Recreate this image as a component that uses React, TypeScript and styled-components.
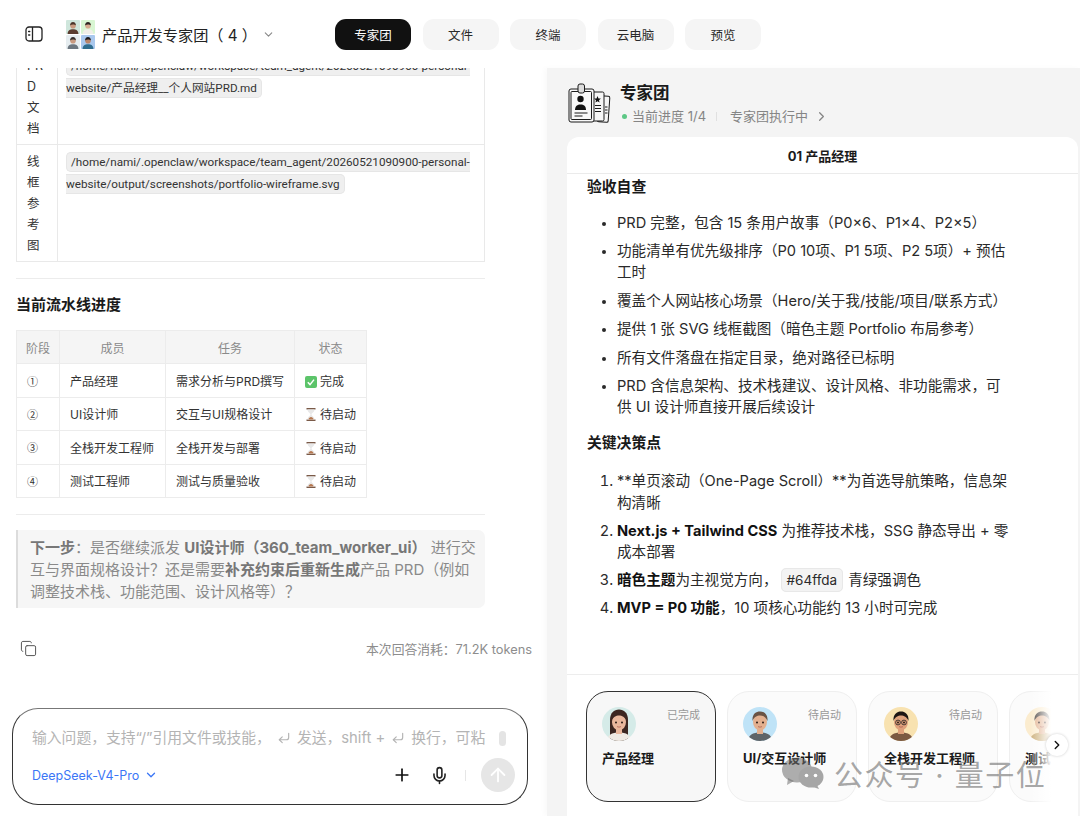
import React from 'react';
import styled, { createGlobalStyle } from 'styled-components';
import { ChevronDown, ChevronRight, Plus, Mic, ArrowUp, Copy, CornerDownLeft } from 'lucide-react';

const FONT = `Inter, "Noto Sans CJK SC", "Noto Sans", sans-serif`;

const GlobalStyle = createGlobalStyle`
  html, body {
    margin: 0;
    padding: 0;
    background: #fff;
    font-family: ${FONT};
    color: #1c1c1c;
  }
  * { box-sizing: border-box; }
`;

const Page = styled.div`
  position: relative;
  width: 1080px;
  height: 816px;
  overflow: hidden;
  display: flex;
  flex-direction: column;
`;

const Header = styled.header`
  height: 68px;
  flex: none;
  display: flex;
  align-items: center;
  padding-left: 25px;
`;

const TitleGroup = styled.div`
  display: flex;
  align-items: center;
  margin-left: 23px;
  width: 269px;
`;

const TeamTitle = styled.div`
  font-size: 15.2px;
  color: #222;
  margin-left: 7px;
  white-space: nowrap;
`;

const AvatarGrid = styled.div`
  display: grid;
  grid-template-columns: 14px 14px;
  grid-auto-rows: 14px;
  gap: 1px;
`;

const Tabs = styled.nav`
  display: flex;
  gap: 11.5px;
`;

const Tab = styled.div<{ $active?: boolean }>`
  width: 76px;
  height: 31px;
  border-radius: 11px;
  display: flex;
  align-items: center;
  justify-content: center;
  font-size: 12.5px;
  background: ${p => (p.$active ? '#111' : '#f5f5f5')};
  color: ${p => (p.$active ? '#fff' : '#2a2a2a')};
`;

const Body = styled.div`
  flex: 1;
  min-height: 0;
  display: flex;
`;

const LeftColumn = styled.section`
  width: 547px;
  flex: none;
  display: flex;
  flex-direction: column;
  min-height: 0;
`;

const ChatScroll = styled.div`
  height: 562px;
  flex: none;
  overflow: hidden;
  padding: 0 62px 0 16px;
`;

const ChatContent = styled.div`
  margin-top: -20px;
`;

const InfoTable = styled.table`
  width: 100%;
  border-collapse: collapse;
  font-size: 12.5px;
  border: 1px solid #e9e9e9;
  color: #333;
  td {
    border: 1px solid #e9e9e9;
    vertical-align: top;
  }
`;

const NarrowCell = styled.td`
  width: 41px;
  padding: 6px 0 0 10px;
  line-height: 21px;
  font-size: 12.5px;
`;

const PathCell = styled.td<{ $first?: boolean }>`
  padding: 6px 10px 0 8px;
  line-height: 22px;
  height: ${p => (p.$first ? '96px' : '117px')};
`;

const PathChip = styled.code`
  font-family: Roboto, "Noto Sans CJK SC", sans-serif;
  font-size: 11.7px;
  color: #333;
  background: #efefef;
  border: 1px solid #e6e6e6;
  border-radius: 5px;
  padding: 2px 4px;
  box-decoration-break: slice;
`;

const Rule = styled.hr`
  border: 0;
  border-top: 1px solid #ececec;
  margin: 16px 0 0;
`;

const SectionHeading = styled.h3`
  font-size: 15px;
  line-height: 20px;
  font-weight: 700;
  color: #1a1a1a;
  margin: 16px 0 15px;
`;

const ProgressTable = styled.table`
  border-collapse: collapse;
  font-size: 12px;
  color: #333;
  th, td {
    border: 1px solid #ececec;
    height: 33.4px;
    padding: 0 0 0 10px;
    text-align: left;
    font-weight: 400;
    white-space: nowrap;
  }
  th {
    background: #f5f5f5;
    color: #8a8a8a;
    text-align: center;
    padding: 0;
  }
`;

const StageMark = styled.span`
  font-family: "Noto Sans CJK SC", sans-serif;
  font-size: 11px;
`;

const Callout = styled.blockquote`
  margin: 15px 0 0;
  padding: 7px 8px 7px 12px;
  background: #f6f6f6;
  border-left: 2px solid #dcdcdc;
  border-radius: 0 7px 7px 0;
  font-size: 15px;
  line-height: 22px;
  color: #8a8a8a;
  height: 78px;
  b { font-weight: 700; color: #777; }
`;

const MetaRow = styled.div`
  display: flex;
  align-items: center;
  justify-content: space-between;
  padding: 0 15px 0 20px;
  height: 30px;
  margin-top: 3px;
`;

const TokenNote = styled.span`
  font-size: 12.8px;
  color: #8d8d8d;
`;

const Composer = styled.div`
  margin: 45px 0 0 12px;
  width: 516px;
  height: 97px;
  border: 1px solid #333;
  border-top-color: #777;
  border-radius: 26px;
  padding: 19px 12px 0 19px;
  background: #fff;
`;

const Prompt = styled.div`
  display: flex;
  align-items: center;
  gap: 6px;
  font-size: 14.8px;
  line-height: 20px;
  color: #b4b4b4;
  white-space: nowrap;
`;

const ScrollThumb = styled.span`
  width: 7px;
  height: 15px;
  margin-left: 8px;
  border-radius: 4px;
  background: #e4e4e4;
`;

const ComposerBar = styled.div`
  display: flex;
  align-items: center;
  margin-top: 10px;
`;

const ModelPicker = styled.div`
  display: flex;
  align-items: center;
  gap: 5px;
  font-size: 12.5px;
  color: #3b76f6;
`;

const ComposerActions = styled.div`
  margin-left: auto;
  display: flex;
  align-items: center;
`;

const Divider = styled.span`
  width: 1px;
  height: 11px;
  background: #e6e6e6;
  margin: 0 15px 0 16px;
`;

const SendButton = styled.div`
  width: 34px;
  height: 34px;
  border-radius: 50%;
  background: #e6e6e6;
  display: flex;
  align-items: center;
  justify-content: center;
  color: #fff;
`;

const Panel = styled.section`
  flex: 1;
  min-width: 0;
  background: #f4f4f4;
  box-shadow: -3px 0 5px rgba(0, 0, 0, 0.025);
  padding-left: 20px;
  display: flex;
  flex-direction: column;
`;

const PanelHeader = styled.div`
  height: 69px;
  flex: none;
  padding-top: 2px;
  display: flex;
  align-items: center;
  gap: 9px;
`;

const PanelTitle = styled.div`
  font-size: 16.5px;
  line-height: 20px;
  font-weight: 700;
  color: #1a1a1a;
`;

const PanelStatus = styled.div`
  display: flex;
  align-items: center;
  font-size: 13px;
  line-height: 16px;
  color: #858585;
  margin-top: 5px;
`;

const GreenDot = styled.span`
  width: 5px;
  height: 5px;
  border-radius: 50%;
  background: #5cc785;
  margin: 0 5px 0 2px;
`;

const StatusSep = styled.span`
  width: 1px;
  height: 9px;
  background: #e0e0e0;
  margin: 0 13px 0 10px;
`;

const Sheet = styled.div`
  flex: 1;
  min-height: 0;
  background: #fff;
  border-radius: 12px 12px 0 0;
  margin-right: 2px;
  display: flex;
  flex-direction: column;
`;

const SheetTitle = styled.div`
  height: 37px;
  flex: none;
  display: flex;
  align-items: center;
  justify-content: center;
  font-size: 13px;
  font-weight: 700;
  color: #1a1a1a;
  border-bottom: 1px solid #ebebeb;
`;

const Report = styled.div`
  height: 501px;
  flex: none;
  overflow: hidden;
  padding: 0 63px 0 20px;
  border-bottom: 1px solid #ededed;
  font-size: 14.6px;
  line-height: 21px;
  color: #2a2a2a;
`;

const ReportHeading = styled.h4<{ $first?: boolean }>`
  font-size: 14.8px;
  line-height: 20px;
  font-weight: 700;
  color: #1a1a1a;
  margin: ${p => (p.$first ? '3px 0 15.5px' : '15px 0 18px')};
`;

const List = styled.ul`
  margin: 0;
  padding-left: 30px;
  li { margin-bottom: 7.5px; }
  li::marker { font-size: 12px; }
`;

const NumberList = styled.ol`
  margin: 0;
  padding-left: 30px;
  line-height: 21.5px;
  li { margin-bottom: 6.5px; }
  b { color: #111; }
`;

const InlineCode = styled.code`
  font-family: ${FONT};
  font-size: 13.5px;
  background: #f3f3f3;
  border: 1px solid #e8e8e8;
  border-radius: 5px;
  padding: 3px 5px;
  margin: 0 5px 0 3px;
`;

const Roster = styled.div`
  position: relative;
  flex: 1;
  min-height: 0;
  display: flex;
  gap: 11px;
  padding: 16px 0 0 19px;
  overflow: hidden;
`;

const MemberCard = styled.div<{ $active?: boolean }>`
  flex: none;
  width: 130px;
  height: 111px;
  border-radius: 22px;
  border: 1px solid ${p => (p.$active ? '#333' : '#efefef')};
  background: ${p => (p.$active ? '#f7f7f7' : '#fbfbfb')};
  padding: 15px 15px 0;
`;

const CardTop = styled.div`
  display: flex;
  justify-content: space-between;
  align-items: flex-start;
  font-size: 11px;
  line-height: 16px;
  color: #999;
`;

const MemberName = styled.div`
  margin-top: 7px;
  font-size: 13px;
  line-height: 20px;
  font-weight: 700;
  color: #1a1a1a;
  white-space: nowrap;
`;

const RosterFade = styled.div`
  position: absolute;
  right: 0;
  top: 0;
  bottom: 0;
  width: 48px;
  background: linear-gradient(90deg, rgba(255, 255, 255, 0) 0, #fff 45%);
`;

const NextButton = styled.div`
  position: absolute;
  top: 59px;
  right: 10px;
  width: 22px;
  height: 22px;
  border-radius: 50%;
  background: #fff;
  box-shadow: 0 0 3px rgba(0, 0, 0, 0.2);
  display: flex;
  align-items: center;
  justify-content: center;
  color: #111;
`;

const Watermark = styled.div`
  position: absolute;
  left: 782px;
  top: 752px;
  display: flex;
  align-items: center;
  gap: 10px;
  font-size: 29px;
  letter-spacing: 1.5px;
  color: rgba(110, 110, 110, 0.62);
  white-space: nowrap;
  pointer-events: none;
`;

const SidebarIcon = () => (
  <svg width="18" height="16" viewBox="0 0 18 16" fill="none" stroke="#222" strokeWidth="1.3">
    <rect x="1" y="1" width="16" height="14" rx="3" />
    <path d="M7.5 1v14" />
    <path d="M3.6 5.5h1.2M3.6 9h1.2" strokeLinecap="round" />
  </svg>
);

const PortraitTile = ({ bg, hair, skin, shirt }: { bg: string; hair: string; skin: string; shirt: string }) => (
  <svg width="14" height="14" viewBox="0 0 13 13">
    <rect width="13" height="13" rx="1" fill={bg} />
    <path d="M1.5 13c0-3.2 2.2-4.4 5-4.4s5 1.2 5 4.4z" fill={shirt} />
    <circle cx="6.5" cy="5.4" r="2.6" fill={skin} />
    <path d="M3.8 5c0-2.2 1.3-3.2 2.7-3.2S9.2 2.8 9.2 5C8 4 5 4 3.8 5z" fill={hair} />
  </svg>
);

const BadgeArt = () => (
  <svg width="44" height="42" viewBox="0 0 44 42" fill="none" stroke="#1b1b1b" strokeWidth="1">
    <rect x="31" y="13" width="11" height="26" rx="1.5" transform="rotate(4 36 26)" fill="#f6f6f6" />
    <rect x="24" y="9" width="13" height="29" rx="1.5" fill="#f6f6f6" />
    <rect x="2" y="6" width="25" height="33" rx="2" fill="#f8f8f8" />
    <rect x="4" y="8.5" width="20.5" height="28" rx="1" />
    <rect x="11" y="1" width="6.5" height="9" rx="2" fill="#ddd" />
    <circle cx="13.5" cy="16" r="3.2" fill="#111" stroke="none" />
    <path d="M8 27c0-4 2.4-5.6 5.6-5.6S19 23 19 27z" fill="#111" stroke="none" />
    <path d="M7.5 30h13M7.5 33h8" />
    <path d="M30.5 13l1 2.4 2.4.2-1.9 1.6.6 2.4-2.1-1.3-2.1 1.3.6-2.4-1.9-1.6 2.4-.2z" fill="#111" stroke="none" />
    <path d="M28 22.5h6M28 25.5h6M28 28.5h6M38 24h2.5M38 27h2.5M38 30h2.5" />
  </svg>
);

type AvatarProps = { bg: string; hair: string; skin: string; shirt: string; long?: boolean; glasses?: boolean };

const Avatar = ({ bg, hair, skin, shirt, long, glasses }: AvatarProps) => (
  <svg width="34" height="34" viewBox="0 0 34 34">
    <defs>
      <clipPath id="avatar-clip">
        <circle cx="17" cy="17" r="17" />
      </clipPath>
    </defs>
    <g clipPath="url(#avatar-clip)">
      <rect width="34" height="34" fill={bg} />
      {long && <path d="M8 34V13C8 6 12 2.5 17 2.5S26 6 26 13v21z" fill={hair} />}
      <path d="M5 34c0-6 5-8.5 12-8.5S29 28 29 34z" fill={shirt} />
      <rect x="14" y="20" width="6" height="7" fill={skin} />
      <ellipse cx="17" cy="15" rx="7" ry="8.5" fill={skin} />
      <path d="M9.5 14C9 7 13 4.5 17 4.5S25 7 24.5 14C23 10 20 8.5 17 8.5S11 10 9.5 14z" fill={hair} />
      <circle cx="14" cy="15.5" r="1" fill="#2a1a14" />
      <circle cx="20" cy="15.5" r="1" fill="#2a1a14" />
      {glasses && (
        <g fill="none" stroke="#222" strokeWidth="0.8">
          <circle cx="14" cy="15.5" r="2.4" />
          <circle cx="20" cy="15.5" r="2.4" />
        </g>
      )}
      <path d="M15 19.5c1.2.8 2.8.8 4 0" fill="none" stroke="#a8584a" strokeWidth="0.7" />
    </g>
  </svg>
);

const Hourglass = () => (
  <svg width="10" height="13" viewBox="0 0 10 13" style={{ verticalAlign: '-2px', margin: '0 4px 0 1px' }}>
    <rect x="0.5" y="0" width="9" height="1.5" fill="#7a5a48" />
    <rect x="0.5" y="11.5" width="9" height="1.5" fill="#7a5a48" />
    <path d="M1.5 1.5h7c0 3-3 3.5-3 5s3 2 3 5h-7c0-3 3-3.5 3-5s-3-2-3-5z" fill="#e8e8e8" />
    <path d="M2.5 11.5c0-1.5 1.5-2.5 2.5-2.5s2.5 1 2.5 2.5z" fill="#b5764f" />
  </svg>
);

const CheckBox = () => (
  <svg width="12" height="12" viewBox="0 0 12 12" style={{ verticalAlign: '-2px', marginRight: 3 }}>
    <rect width="12" height="12" rx="2" fill="#5cc46a" />
    <path d="M2.8 6.2l2.2 2.4 4-5" fill="none" stroke="#fff" strokeWidth="1.5" />
  </svg>
);

const WeChatMark = () => (
  <svg width="42" height="32" viewBox="0 0 42 32">
    <ellipse cx="15" cy="13" rx="15" ry="12.5" fill="rgba(110,110,110,0.55)" />
    <path d="M6 21l-1 7 7-4z" fill="rgba(110,110,110,0.55)" />
    <ellipse cx="29" cy="20" rx="12.5" ry="10.5" fill="#a6a6a6" />
    <path d="M35 28l2 4-6-2z" fill="#a6a6a6" />
    <circle cx="24.5" cy="18.5" r="1.8" fill="#fff" />
    <circle cx="33.5" cy="18.5" r="1.8" fill="#fff" />
  </svg>
);

const progressRows = [
  { stage: '①', member: '产品经理', task: '需求分析与PRD撰写', done: true },
  { stage: '②', member: 'UI设计师', task: '交互与UI规格设计', done: false },
  { stage: '③', member: '全栈开发工程师', task: '全栈开发与部署', done: false },
  { stage: '④', member: '测试工程师', task: '测试与质量验收', done: false },
];

const checks = [
  'PRD 完整，包含 15 条用户故事（P0×6、P1×4、P2×5）',
  '功能清单有优先级排序（P0 10项、P1 5项、P2 5项）+ 预估工时',
  '覆盖个人网站核心场景（Hero/关于我/技能/项目/联系方式）',
  '提供 1 张 SVG 线框截图（暗色主题 Portfolio 布局参考）',
  '所有文件落盘在指定目录，绝对路径已标明',
  'PRD 含信息架构、技术栈建议、设计风格、非功能需求，可供 UI 设计师直接开展后续设计',
];

const members: (AvatarProps & { name: string; status: string; active?: boolean })[] = [
  { name: '产品经理', status: '已完成', active: true, bg: '#d5ebe8', hair: '#3c2620', skin: '#e9b79c', shirt: '#efe9e2', long: true },
  { name: 'UI/交互设计师', status: '待启动', bg: '#bfe3f7', hair: '#6a5344', skin: '#e3b08f', shirt: '#5e6468' },
  { name: '全栈开发工程师', status: '待启动', bg: '#f8e2b0', hair: '#1d1613', skin: '#dfa27c', shirt: '#7b5a42', glasses: true },
  { name: '测试工程师', status: '待启动', bg: '#fbeccf', hair: '#4b4440', skin: '#e3b391', shirt: '#cdb27f' },
];

export default function App() {
  return (
    <Page>
      <GlobalStyle />
      <Header>
        <SidebarIcon />
        <TitleGroup>
          <AvatarGrid>
            <PortraitTile bg="#cfe6dc" hair="#4a3328" skin="#c99a80" shirt="#5a3d30" />
            <PortraitTile bg="#d8f6d2" hair="#2c2420" skin="#d8ab90" shirt="#f1efe9" />
            <PortraitTile bg="#e6edf0" hair="#35302c" skin="#c99a80" shirt="#6d7780" />
            <PortraitTile bg="#a9c8ee" hair="#1d1a1c" skin="#b98469" shirt="#2f6d8e" />
          </AvatarGrid>
          <TeamTitle>产品开发专家团（ 4 ）</TeamTitle>
          <ChevronDown size={13} color="#888" style={{ marginLeft: 5 }} />
        </TitleGroup>
        <Tabs>
          <Tab $active>专家团</Tab>
          <Tab>文件</Tab>
          <Tab>终端</Tab>
          <Tab>云电脑</Tab>
          <Tab>预览</Tab>
        </Tabs>
      </Header>
      <Body>
        <LeftColumn>
          <ChatScroll>
            <ChatContent>
              <InfoTable>
                <tbody>
                  <tr>
                    <NarrowCell>PR<br />D<br />文<br />档</NarrowCell>
                    <PathCell $first>
                      <PathChip>/home/nami/.openclaw/workspace/team_agent/20260521090900-personal-website/产品经理__个人网站PRD.md</PathChip>
                    </PathCell>
                  </tr>
                  <tr>
                    <NarrowCell>线<br />框<br />参<br />考<br />图</NarrowCell>
                    <PathCell>
                      <PathChip>/home/nami/.openclaw/workspace/team_agent/20260521090900-personal-website/output/screenshots/portfolio-wireframe.svg</PathChip>
                    </PathCell>
                  </tr>
                </tbody>
              </InfoTable>
              <Rule />
              <SectionHeading>当前流水线进度</SectionHeading>
              <ProgressTable>
                <thead>
                  <tr>
                    <th style={{ width: 43 }}>阶段</th>
                    <th style={{ width: 106 }}>成员</th>
                    <th style={{ width: 129 }}>任务</th>
                    <th style={{ width: 72 }}>状态</th>
                  </tr>
                </thead>
                <tbody>
                  {progressRows.map(row => (
                    <tr key={row.stage}>
                      <td><StageMark>{row.stage}</StageMark></td>
                      <td>{row.member}</td>
                      <td>{row.task}</td>
                      <td>
                        {row.done ? <CheckBox /> : <Hourglass />}
                        {row.done ? '完成' : '待启动'}
                      </td>
                    </tr>
                  ))}
                </tbody>
              </ProgressTable>
              <Rule />
              <Callout>
                <b>下一步</b>：是否继续派发 <b>UI设计师（360_team_worker_ui）</b> 进行交互与界面规格设计？还是需要<b>补充约束后重新生成</b>产品 PRD（例如调整技术栈、功能范围、设计风格等）？
              </Callout>
            </ChatContent>
          </ChatScroll>
          <MetaRow>
            <Copy size={17} color="#555" strokeWidth={1.4} />
            <TokenNote>本次回答消耗：71.2K tokens</TokenNote>
          </MetaRow>
          <Composer>
            <Prompt>
              输入问题，支持“/”引用文件或技能，
              <CornerDownLeft size={14} />
              发送，shift +
              <CornerDownLeft size={14} />
              换行，可粘
              <ScrollThumb />
            </Prompt>
            <ComposerBar>
              <ModelPicker>
                DeepSeek-V4-Pro
                <ChevronDown size={14} strokeWidth={2.2} />
              </ModelPicker>
              <ComposerActions>
                <Plus size={20} color="#111" style={{ marginRight: 18 }} />
                <Mic size={19} color="#222" />
                <Divider />
                <SendButton>
                  <ArrowUp size={22} />
                </SendButton>
              </ComposerActions>
            </ComposerBar>
          </Composer>
        </LeftColumn>
        <Panel>
          <PanelHeader>
            <BadgeArt />
            <div>
              <PanelTitle>专家团</PanelTitle>
              <PanelStatus>
                <GreenDot />
                当前进度 1/4
                <StatusSep />
                专家团执行中
                <ChevronRight size={15} style={{ marginLeft: 6 }} />
              </PanelStatus>
            </div>
          </PanelHeader>
          <Sheet>
            <SheetTitle>01 产品经理</SheetTitle>
            <Report>
              <ReportHeading $first>验收自查</ReportHeading>
              <List>
                {checks.map(text => (
                  <li key={text}>{text}</li>
                ))}
              </List>
              <ReportHeading>关键决策点</ReportHeading>
              <NumberList>
                <li>**单页滚动（One-Page Scroll）**为首选导航策略，信息架构清晰</li>
                <li><b>Next.js + Tailwind CSS</b> 为推荐技术栈，SSG 静态导出 + 零成本部署</li>
                <li><b>暗色主题</b>为主视觉方向，<InlineCode>#64ffda</InlineCode>青绿强调色</li>
                <li><b>MVP = P0 功能</b>，10 项核心功能约 13 小时可完成</li>
              </NumberList>
            </Report>
            <Roster>
              {members.map(({ name, status, active, ...art }) => (
                <MemberCard key={name} $active={active}>
                  <CardTop>
                    <Avatar {...art} />
                    <span>{status}</span>
                  </CardTop>
                  <MemberName>{name}</MemberName>
                </MemberCard>
              ))}
              <RosterFade />
              <NextButton>
                <ChevronRight size={14} strokeWidth={2.4} />
              </NextButton>
            </Roster>
          </Sheet>
        </Panel>
      </Body>
      <Watermark>
        <WeChatMark />
        公众号 · 量子位
      </Watermark>
    </Page>
  );
}
